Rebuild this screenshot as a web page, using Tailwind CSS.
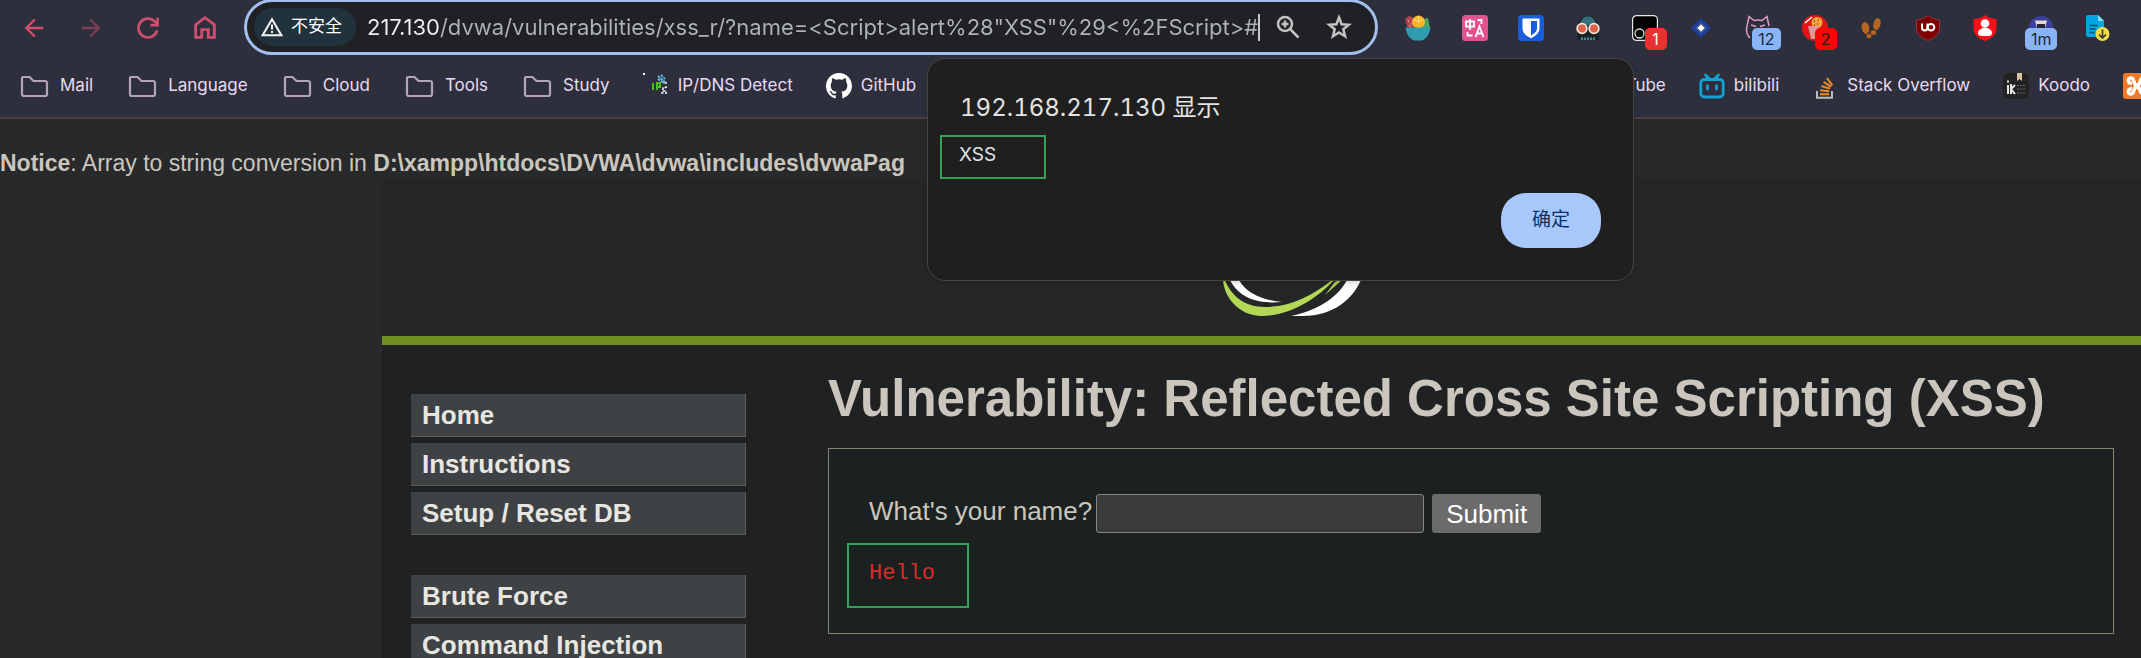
<!DOCTYPE html>
<html lang="zh-CN">
<head>
<meta charset="utf-8">
<title>Vulnerability: Reflected Cross Site Scripting (XSS)</title>
<script src="https://cdn.jsdelivr.net/npm/@tailwindcss/browser@4"></script>
</head>
<body class="relative flex h-screen flex-col overflow-hidden bg-[#28292a] font-['Liberation_Sans',Arial,sans-serif] text-[#cac6be]">

<svg class="hidden" aria-hidden="true">
  <symbol id="folder" viewBox="0 0 32 26"><path d="M5 4h6.500l4 4H27q2 0 2 2v11q0 2-2 2H6q-2 0-2-2V5q0-1 1-1z" fill="none" stroke="#b3a5b6" stroke-width="2.200"/></symbol>
</svg>

<header class="shrink-0 border-b-2 border-[#493e49] bg-[#2d303c] font-['Inter','Noto_Sans_CJK_SC',sans-serif]">
  <!-- Toolbar -->
  <div class="flex h-[55px] items-center">
    <nav class="flex items-center gap-[29px] pl-[20px] text-[#d04f6e]">
      <button type="button" aria-label="Back"><svg class="size-7" viewBox="0 0 24 24" fill="currentColor"><path d="M20 11H7.830l5.590-5.590L12 4l-8 8 8 8 1.410-1.410L7.830 13H20z"/></svg></button>
      <button type="button" aria-label="Forward" class="text-[#7d3e54]"><svg class="size-7" viewBox="0 0 24 24" fill="currentColor"><path d="M12 4l-1.410 1.410L16.170 11H4v2h12.170l-5.580 5.590L12 20l8-8z"/></svg></button>
      <button type="button" aria-label="Reload"><svg class="size-7" viewBox="0 0 24 24" fill="none" stroke="currentColor" stroke-width="2.300"><path d="M19.800 14A8.100 8.100 0 1 1 17.700 6.300L20 8.600"/><path d="M14 9.500h6.200V3.300"/></svg></button>
      <button type="button" aria-label="Home"><svg class="size-7" viewBox="0 0 24 24" fill="none" stroke="currentColor" stroke-width="2.400"><path d="M4 20V9.200l8-6 8 6V20h-5.200v-6.600H9.200V20z"/></svg></button>
    </nav>
    <div class="-mt-px ml-[25px] flex h-[56px] min-w-0 flex-1 items-center rounded-full border-[3px] border-[#a3bff0] bg-[#1f2124] pl-[7px] pr-[22px]">
      <button type="button" class="flex h-[38px] w-[102px] shrink-0 items-center gap-[7px] rounded-full bg-[#22323d] pl-[6px] text-[17px] text-white">
        <svg class="size-[24px]" viewBox="0 0 24 24" fill="none" stroke="#f4f4f4" stroke-width="2"><path d="M12 4.200L2.600 20.200h18.800z"/><path d="M12 9.500v5M12 16v2"/></svg>不安全</button>
      <div class="ml-[11px] flex min-w-0 flex-1 items-center">
        <input type="text" aria-label="Address" spellcheck="false" class="field-sizing-content min-w-0 bg-[linear-gradient(90deg,#f1f1f1_73px,#b0b3b7_73px)] bg-clip-text text-[22px] text-transparent outline-none" value='217.130/dvwa/vulnerabilities/xss_r/?name=&lt;Script&gt;alert%28"XSS"%29&lt;%2FScript&gt;#'>
        <span class="h-[27px] w-[2px] shrink-0 bg-[#c8c8c8]"></span>
      </div>
      <button type="button" aria-label="Zoom" class="shrink-0"><svg class="size-[26px]" viewBox="0 0 26 26" fill="none" stroke="#c3c3c3" stroke-width="2.500"><circle cx="10" cy="10" r="7"/><path d="M15 15l8.500 8.500M10 6.500v7M6.500 10h7"/></svg></button>
      <button type="button" aria-label="Bookmark" class="ml-[24px] shrink-0"><svg class="size-[28px]" viewBox="0 0 28 28" fill="none" stroke="#c3c3c3" stroke-width="2.500"><path d="M14 4.500l2.600 6.700 7.200.5-5.500 4.600 1.800 7-6.100-3.900-6.100 3.900 1.800-7L4.200 11.700l7.200-.5z"/></svg></button>
    </div>
    <!-- Extensions -->
    <div class="ml-[27px] mr-[30px] flex w-[706px] shrink-0 items-center justify-between text-[16px] leading-[22px] *:relative *:size-[26px] *:shrink-0">
      <button type="button" aria-label="Salad"><svg viewBox="0 0 26 26"><path d="M0 4l4-3 3 1 3 6-2 6H3z" fill="#b9424c"/><path d="M3 6h1M6 9h1M4 11h1" stroke="#f3d0cf"/><path d="M19 4l4-1 2 10h-8z" fill="#4aa564"/><circle cx="13.500" cy="7" r="6.500" fill="#f9b52a"/><path d="M13.500 7l-5-3M13.500 7V1M13.500 7l5-3" stroke="#fde08a"/><path d="M.5 12.500h25C25 19 21 24 17 25.500H9C5 24 1 19 .5 12.500z" fill="#2f9db0"/></svg></button>
      <button type="button" aria-label="Translate"><svg viewBox="0 0 26 26"><rect width="26" height="26" rx="3.500" fill="#e2528d"/><path d="M4 6.500h8v5H4zM8 4v11M15.500 5h4v4M5.500 17v3.500h5M13.500 22l4-10.500 4 10.500M15 18.500h5" fill="none" stroke="#fff" stroke-width="1.800"/></svg></button>
      <button type="button" aria-label="Password manager"><svg viewBox="0 0 26 26"><rect width="26" height="26" rx="3.500" fill="#175ddc"/><path d="M4.500 3.500h17v10c0 5-5 8-8.500 9.800C9.500 21.500 4.500 18.500 4.500 13.500z" fill="#fff"/><path d="M13 6h6v7.500c0 3-3 5-6 7z" fill="#175ddc"/></svg></button>
      <button type="button" aria-label="Reader mask"><svg viewBox="0 0 26 26"><path d="M3 12C3 4 8 1 13 1s10 3 10 11l1 13H2z" fill="#1a2228"/><path d="M4.500 10C6 4 9 1.500 13 1.500S20 4 21.500 10z" fill="#33707e"/><circle cx="7" cy="13.500" r="4.800" fill="#e0604c" stroke="#f6e3d2" stroke-width="1.800"/><circle cx="19" cy="13.500" r="4.800" fill="#e0604c" stroke="#f6e3d2" stroke-width="1.800"/><path d="M7 22.500v2.500M10 22.500v2.500M13 22.500v2.500M16 22.500v2.500M19 22.500v2.500" stroke="#63c3d1" stroke-width="1.300"/></svg></button>
      <button type="button" aria-label="Script manager"><svg viewBox="0 0 26 26"><rect x=".6" y=".6" width="24.800" height="24.800" rx="4" fill="#000" stroke="#e6e6e6" stroke-width="1.200"/><circle cx="7.500" cy="18.500" r="4.500" fill="none" stroke="#ddd" stroke-width="1.300"/><circle cx="18" cy="18.500" r="4.500" fill="none" stroke="#ddd" stroke-width="1.300"/></svg><span class="absolute left-[13px] top-[13px] w-[22px] rounded-[5px] bg-[#ea3131] text-center text-white">1</span></button>
      <button type="button" aria-label="Diamond"><svg viewBox="0 0 26 26"><path d="M13 5l8 8-8 8-8-8z" fill="#1d3fa0" stroke="#1d3fa0" stroke-width="3" stroke-linejoin="round"/><path d="M13 7.500l5.500 5.500-5.500 5.500L7.500 13z" fill="#54617f"/><path d="M13 9.500l3.500 3.500-3.500 3.500L9.500 13z" fill="#fff"/></svg></button>
      <button type="button" aria-label="Cat"><svg viewBox="0 0 26 26" fill="none" stroke="#e59bc4" stroke-width="1.500"><path d="M5 23C2 20 1 15 2 11L4 1.500 9 5.500q4-1 8 0l5-4L24 11"/><path d="M6 10l5 1.500M20 10l-5 1.500"/></svg><span class="absolute left-[7px] top-[13px] w-[29px] rounded-[5px] bg-[#8ab4f8] text-center text-[#202939]">12</span></button>
      <button type="button" aria-label="Popcorn"><svg viewBox="0 0 26 26"><circle cx="13" cy="13" r="13" fill="#e51414"/><circle cx="15" cy="7.500" r="5.500" fill="#f0a43a"/><path d="M12 6h1M16 5h1M15 9h1M12 10h1" stroke="#8c4b12" stroke-width="1.500"/><path d="M3 8l7-6" stroke="#fff" stroke-width="1.500"/><path d="M6 11h12l-3 13H9z" fill="#d99a96"/></svg><span class="absolute left-[13px] top-[13px] w-[22px] rounded-[5px] bg-[#fb0404] text-center text-[#3a0e10]">2</span></button>
      <button type="button" aria-label="Footprints"><svg viewBox="0 0 26 26" fill="#b8651f"><ellipse cx="7.500" cy="13" rx="3.800" ry="6" transform="rotate(-12 7.500 13)"/><ellipse cx="11" cy="21" rx="2.500" ry="2.300"/><ellipse cx="19" cy="9" rx="3.500" ry="6" transform="rotate(14 19 9)"/><ellipse cx="15.500" cy="17.500" rx="2.700" ry="2.300"/></svg></button>
      <button type="button" aria-label="Ad blocker"><svg viewBox="0 0 26 26"><path d="M13 .5c3 2.500 7 4 11.500 4.500v8c0 6-5 10-11.500 12.500C6.500 23 1.500 19 1.500 13V5C6 4.500 10 3 13 .5z" fill="#800000" stroke="#8f3a3e"/><path d="M7 8.500v4q0 3 2.700 3t2.800-3v-4" fill="none" stroke="#fff" stroke-width="2"/><circle cx="16" cy="12.300" r="3.300" fill="none" stroke="#fff" stroke-width="2"/></svg></button>
      <button type="button" aria-label="Privacy shield"><svg viewBox="0 0 26 26"><path d="M13 0c3 2.500 7 4 11.500 4v9c0 6-5 11-11.500 13C6.500 24 1.500 19 1.500 13V4C6 4 10 2.500 13 0z" fill="#fb0f16"/><circle cx="13" cy="8.500" r="4.300" fill="#fff"/><path d="M6 18c0-3 3-5 7-5s7 2 7 5-3 3-7 3-7 0-7-3z" fill="#fff"/></svg></button>
      <button type="button" aria-label="Timer"><svg viewBox="0 0 26 26"><path d="M1 14C1 5 7 1 13 1s12 4 12 13z" fill="#3a3fa0"/><path d="M7 5.500h12l-2 8H9z" fill="#e9d9c8"/><path d="M9 9h8v5H9z" fill="#22263c"/></svg><span class="absolute -left-[3px] top-[13px] w-[32px] rounded-[5px] bg-[#8ab4f8] text-center text-[#202939]">1m</span></button>
      <button type="button" aria-label="Page saver"><svg viewBox="0 0 26 26" overflow="visible"><path d="M3 0h10l6 6v16H3q-2 0-2-2V2q0-2 2-2z" fill="#00a5e3"/><path d="M13 0l6 6h-6z" fill="#8fdcf8"/><path d="M4.500 10.500h8M4.500 14h6M4.500 17.500h5" stroke="#0a4f78" stroke-width="1.500"/><circle cx="17.500" cy="19" r="7" fill="#f3dc4a"/><path d="M17.500 14.500v8M14 19.500l3.500 3.500 3.500-3.500" fill="none" stroke="#3a3d20" stroke-width="1.700"/></svg></button>
    </div>
  </div>
  <!-- Bookmarks -->
  <nav class="flex h-[62px] justify-between overflow-hidden whitespace-nowrap pl-[18px] text-[17px] text-[#ead9f2] *:flex *:items-center *:gap-[33px]">
    <div>
      <a href="#" class="flex items-center gap-[10px]"><svg class="h-[26px] w-8"><use href="#folder"/></svg>Mail</a>
      <a href="#" class="flex items-center gap-[10px]"><svg class="h-[26px] w-8"><use href="#folder"/></svg>Language</a>
      <a href="#" class="flex items-center gap-[10px]"><svg class="h-[26px] w-8"><use href="#folder"/></svg>Cloud</a>
      <a href="#" class="flex items-center gap-[10px]"><svg class="h-[26px] w-8"><use href="#folder"/></svg>Tools</a>
      <a href="#" class="flex items-center gap-[10px]"><svg class="h-[26px] w-8"><use href="#folder"/></svg>Study</a>
      <a href="#" class="flex items-center gap-[9px]"><svg class="size-[26px]" viewBox="0 0 26 26"><path d="M0 0h2v2H0z" fill="#fff"/><path d="M10 10v7M14 17v-7h3v4h-3" fill="none" stroke="#45c21f" stroke-width="2"/><path d="M15 3l8 7M15 6l6 4M18 2l4 4" stroke="#63b7dc" stroke-width="2" stroke-dasharray="2.500 1"/><path d="M24 14l-4 1v3h3v3M18 20h3M24 10h-4" fill="none" stroke="#e9f3f5" stroke-width="1.600" stroke-dasharray="2.500 1"/></svg>IP/DNS Detect</a>
      <a href="#" class="flex items-center gap-[9px]"><svg class="size-[26px]" viewBox="0 0 16 16" fill="#fff"><path d="M8 0C3.580 0 0 3.580 0 8c0 3.540 2.290 6.530 5.470 7.590.4.070.55-.17.55-.38 0-.19-.01-.82-.01-1.490-2.010.37-2.530-.49-2.690-.94-.09-.23-.48-.94-.82-1.130-.28-.15-.68-.52-.01-.53.63-.01 1.080.58 1.230.82.72 1.210 1.870.87 2.330.66.07-.52.28-.87.51-1.070-1.780-.2-3.640-.89-3.640-3.950 0-.87.31-1.590.82-2.150-.08-.2-.36-1.020.08-2.120 0 0 .67-.21 2.200.82a7.600 7.600 0 0 1 4 0c1.530-1.040 2.200-.82 2.200-.82.44 1.100.16 1.920.08 2.120.51.56.82 1.270.82 2.150 0 3.070-1.870 3.750-3.650 3.950.29.25.54.73.54 1.480 0 1.070-.01 1.930-.01 2.200 0 .21.15.46.55.38A8.010 8.010 0 0 0 16 8c0-4.420-3.580-8-8-8z"/></svg>GitHub</a>
    </div>
    <div class="-mr-[8px]">
      <a href="#">YouTube</a>
      <a href="#" class="flex items-center gap-[9px]"><svg class="size-[26px]" viewBox="0 0 26 26" fill="none" stroke="#15a0d8" stroke-width="2.800" stroke-linecap="round"><rect x="1.800" y="6.500" width="22.400" height="17.500" rx="3.500"/><path d="M6.500 2L10 5.500M19.500 2L16 5.500M8.500 13v3M17.500 13v3"/></svg>bilibili</a>
      <a href="#" class="flex items-center gap-[9px]"><svg class="size-[26px]" viewBox="0 0 26 26" fill="none"><path d="M5 18v6.800h15V18" stroke="#b9bbbd" stroke-width="2"/><path d="M8 21.300h9M8.200 17.300l9 1M9.300 13l8.600 2.600M11.700 8.800l7.400 5M15 5.200l5.400 7.200" stroke="#ef8a2b" stroke-width="2"/></svg>Stack Overflow</a>
      <a href="#" class="flex items-center gap-[9px]"><svg class="size-[26px]" viewBox="0 0 26 26"><rect width="26" height="26" rx="5" fill="#232323"/><path d="M14 0h5v8l-2.500-2L14 8z" fill="#d9c3a3"/><path d="M5 12v9M5 7.500v2M8 11v10M12 12l-4 4 4 5" fill="none" stroke="#e5e5e5" stroke-width="2"/><path d="M14 12.500h8M14 16h8M14 20h8" stroke="#666" stroke-dasharray="2 1"/></svg>Koodo</a>
      <a href="#" aria-label="XAMPP"><svg class="size-[26px]" viewBox="0 0 26 26"><rect width="26" height="26" rx="3" fill="#f0792a"/><path d="M14 10v6M9 10.500C4 10 4.500 5 8 5c4 0 2.500 8 6 8s2-8 6-8c3.500 0 4 5-1 5.500M9 15.500C4 16 4.500 21 8 21c4 0 2.500-8 6-8s2 8 6 8c3.500 0 4-5-1-5.500" fill="none" stroke="#fff" stroke-width="3.400"/></svg></a>
    </div>
  </nav>
</header>

<p class="shrink-0 overflow-hidden whitespace-nowrap pt-[29px] text-[23px] leading-[30px]"><b>Notice</b>: Array to string conversion in <b>D:\xampp\htdocs\DVWA\dvwa\includes\dvwaPag</b></p>

<div class="ml-[382px] flex min-h-0 flex-1 flex-col bg-[#202123]">
  <div class="flex h-[167px] shrink-0 items-end border-b-9 border-[#6f8f22] bg-[#242628] pb-[20px] pl-[778px]">
    <svg class="h-[46px] w-[206px]" viewBox="1160 270 206 46" role="img" aria-label="DVWA">
      <g fill="#5d5f60"><ellipse cx="1174" cy="276" rx="12" ry="5"/><ellipse cx="1262" cy="276" rx="10" ry="5"/><ellipse cx="1282" cy="276" rx="8" ry="5"/><ellipse cx="1299" cy="276" rx="8" ry="5"/></g>
      <path d="M1230 270v10C1240 300 1262 304 1282 302 1262 300 1246 293 1239 280V270z" fill="#fff"/>
      <path d="M1223 270v10C1224 296 1238 316 1262 316c28 0 56-18 72-36v-4l-2 4C1312 296 1290 307 1265 307c-20 0-34-11-40-27z" fill="#b3d856"/>
      <path d="M1325 295l19-17-9 4z" fill="#b3d856"/>
      <path d="M1347 280l3-8h14l-3 8c-8 18-26 36-59 36h-11c24-5 46-17 56-36z" fill="#fff"/>
    </svg>
  </div>
  <div class="flex items-start gap-[82px] pl-[29px] pr-[27px]">
    <nav class="mt-[49px] flex w-[335px] shrink-0 flex-col gap-[6px] text-[26px] font-bold leading-[42px] text-[#e8e6e1] *:border-b *:border-r *:border-[#5f5c53] *:bg-[#3e4244] *:pl-[11px]">
      <a href="#">Home</a>
      <a href="#">Instructions</a>
      <a href="#">Setup / Reset DB</a>
      <a href="#" class="mt-[34px]">Brute Force</a>
      <a href="#">Command Injection</a>
    </nav>
    <main class="min-w-0 flex-1">
      <h1 class="mt-[24px] whitespace-nowrap text-[51px] font-bold leading-[60px]">Vulnerability: Reflected Cross Site Scripting (XSS)</h1>
      <div class="mt-[19px] border border-[#858371] bg-[#1b2121] px-[40px] pb-[25px] pt-[45px] text-[26px]">
        <form class="flex h-[39px] gap-[4px]" onsubmit="return false">
          <label for="name" class="leading-[34px]">What's your name?</label>
          <input id="name" type="text" class="w-[328px] rounded-[3px] border border-[#858585] bg-[#3b3b3b] px-1 text-white">
          <button type="submit" class="ml-[4px] w-[109px] rounded-[3px] bg-[#6b6b6b] leading-[38px] text-white">Submit</button>
        </form>
        <pre class="-ml-[22px] mt-[10px] h-[65px] w-[122px] border-2 border-[#34a158] pl-[20px] font-['Liberation_Mono','Courier_New',monospace] text-[22px] leading-[58px] text-[#dc2a2a]">Hello</pre>
      </div>
    </main>
  </div>
</div>

<!-- Alert window over the page -->
<div role="alertdialog" aria-labelledby="alert-title" class="absolute left-[927px] top-[58px] flex h-[223px] w-[707px] flex-col rounded-[18px] border border-[#454644] bg-[#1f1f1f] font-['Inter','Noto_Sans_CJK_SC',sans-serif] text-[#e3e3e3] shadow-md">
  <h2 id="alert-title" class="ml-[32px] mt-[34px] text-[24px] leading-[30px] tabular-nums">192.168.217.130 显示</h2>
  <p class="ml-[12px] mt-[12px] h-[44px] w-[106px] border-2 border-[#34a158] pl-[17px] text-[19px] leading-[36px]">XSS</p>
  <button type="button" class="ml-auto mr-[32px] mt-[14px] h-[55px] w-[100px] rounded-[25px] bg-[#a8c7fa] text-[19px] text-[#0a3069]">确定</button>
</div>
</body>
</html>
